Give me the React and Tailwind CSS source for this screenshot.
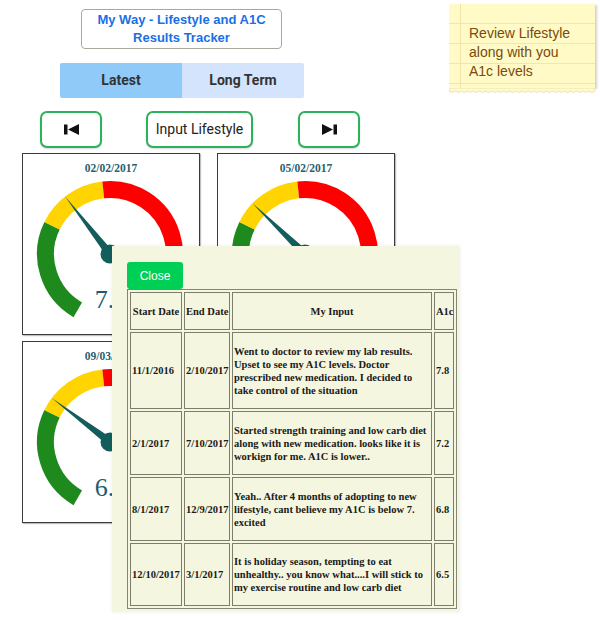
import React from 'react';

const rows = [
  {
    start: '11/1/2016',
    end: '2/10/2017',
    note: 'Went to doctor to review my lab results. Upset to see my A1C levels. Doctor prescribed new medication. I decided to take control of the situation',
    a1c: '7.8',
    h: 'h-[77px]',
  },
  {
    start: '2/1/2017',
    end: '7/10/2017',
    note: 'Started strength training and low carb diet along with new medication. looks like it is workign for me. A1C is lower..',
    a1c: '7.2',
    h: 'h-[64px]',
  },
  {
    start: '8/1/2017',
    end: '12/9/2017',
    note: 'Yeah.. After 4 months of adopting to new lifestyle, cant believe my A1C is below 7. excited',
    a1c: '6.8',
    h: 'h-[64px]',
  },
  {
    start: '12/10/2017',
    end: '3/1/2017',
    note: 'It is holiday season, tempting to eat unhealthy.. you know what....I will stick to my exercise routine and low carb diet',
    a1c: '6.5',
    h: 'h-[63px]',
  },
];

// the 2nd value and the whole 4th card sit under the popup, so they carry no text
const readings = [
  { id: 1, date: '02/02/2017', value: '7.8', angle: -38 },
  { id: 2, date: '05/02/2017', value: '', angle: -46 },
  { id: 3, date: '09/03/2017', value: '6.8', angle: -53 },
  { id: 4, date: '', value: '', angle: -58 },
];

function pt(cx, cy, r, deg) {
  const a = (deg * Math.PI) / 180;
  return [cx + r * Math.sin(a), cy - r * Math.cos(a)];
}

function arc(cx, cy, r, a0, a1) {
  const [x0, y0] = pt(cx, cy, r, a0);
  const [x1, y1] = pt(cx, cy, r, a1);
  const large = a1 - a0 > 180 ? 1 : 0;
  return `M ${x0} ${y0} A ${r} ${r} 0 ${large} 1 ${x1} ${y1}`;
}

function Gauge({ angle }) {
  const cx = 87;
  const cy = 78;
  const [tx, ty] = pt(cx, cy, 73, angle);
  const [lx, ly] = pt(cx, cy, 4, angle - 90);
  const [rx, ry] = pt(cx, cy, 4, angle + 90);
  return (
    <svg width="175" height="157" viewBox="0 0 175 157" className="col-start-1 row-start-1">
      <path d={arc(cx, cy, 64.5, -150, -64)} stroke="#1e8a1e" strokeWidth="17" fill="none" />
      <path d={arc(cx, cy, 64.5, -64, -6)} stroke="#ffd400" strokeWidth="17" fill="none" />
      <path d={arc(cx, cy, 64.5, -6, 150)} stroke="#ff0000" strokeWidth="17" fill="none" />
      <polygon points={`${tx},${ty} ${lx},${ly} ${rx},${ry}`} fill="#135e5c" />
      <circle cx={cx} cy={cy} r="9.5" fill="#135e5c" />
    </svg>
  );
}

function Card({ date, value, angle }) {
  return (
    <div className="w-[178px] h-[182px] border border-[#3a3a3a] shadow-[1px_1px_1px_rgba(0,0,0,0.25)] bg-white flex flex-col">
      <div className="pt-[8px] h-[22px] text-center text-[11.5px] leading-[13px] font-bold text-[#2a5f6f] font-['Liberation_Serif',serif]">
        {date}
      </div>
      <div className="grid">
        <Gauge angle={angle} />
        {value && (
          <div className="col-start-1 row-start-1 mt-[111px] text-center text-[26px] leading-[26px] text-[#1d5c6e] font-['Liberation_Serif',serif]">
            {value}
          </div>
        )}
      </div>
    </div>
  );
}

function SkipIcon({ flip }) {
  return (
    <svg width="15" height="11" viewBox="0 0 15 11" className={flip ? 'rotate-180' : ''}>
      <rect x="0" y="0.5" width="3.5" height="10" fill="#111" />
      <polygon points="4,5.5 15,0 15,11" fill="#111" />
    </svg>
  );
}

export default function App() {
  return (
    <div className="relative w-[600px] h-[620px] overflow-hidden bg-white font-['Liberation_Sans',Arial,sans-serif]">
      <div className="flex">
        <div className="w-[449px]">
          <div className="ml-[81px] mt-[9px] w-[201px] h-[40px] border-[1.5px] border-[#a4ab9c] rounded-[4px] flex flex-col items-center justify-center text-[13px] leading-[18px] font-bold text-[#1a6fe6]">
            <span>My Way - Lifestyle and A1C</span>
            <span>Results Tracker</span>
          </div>

          <div className="ml-[60px] mt-[14px] flex font-['Roboto',sans-serif] text-[14px] font-bold text-[#333]">
            <div className="w-[122px] h-[35px] bg-[#90caf9] rounded-l-[2px] flex items-center justify-center">Latest</div>
            <div className="w-[122px] h-[35px] bg-[#d3e4fc] rounded-r-[2px] flex items-center justify-center">Long Term</div>
          </div>

          <div className="mt-[13px] flex">
            <button className="ml-[40px] w-[62px] h-[37px] border-2 border-[#2bb35b] rounded-[7px] bg-white shadow-[0_1px_2px_rgba(0,0,0,0.15)] flex items-center justify-center">
              <SkipIcon />
            </button>
            <button className="ml-[44px] w-[107px] h-[37px] border-2 border-[#2bb35b] rounded-[7px] bg-white shadow-[0_1px_2px_rgba(0,0,0,0.15)] font-['Roboto',sans-serif] text-[14px] text-[#222]">
              Input Lifestyle
            </button>
            <button className="ml-[45px] w-[62px] h-[37px] border-2 border-[#2bb35b] rounded-[7px] bg-white shadow-[0_1px_2px_rgba(0,0,0,0.15)] flex items-center justify-center">
              <SkipIcon flip />
            </button>
          </div>
        </div>

        <div className="mt-[4px] w-[146px]">
          <div className="h-[84px] pl-[11px] bg-[#fffac6] bg-[repeating-linear-gradient(to_bottom,transparent_0px,transparent_19px,#f0e6ae_19px,#f0e6ae_20px)] shadow-[2px_1px_2px_rgba(0,0,0,0.18)]">
            <div className="h-full border-l border-[#f0e3ab] pl-[8px] pt-[20px] text-[14px] leading-[19px] text-[#7a4a0c]">
              Review Lifestyle
              <br />
              along with you
              <br />
              A1c levels
            </div>
          </div>
          <svg width="146" height="6" viewBox="0 0 146 6" className="block">
            <path
              d={
                'M0 0 L146 0 L146 3 ' +
                Array.from({ length: 24 }, (_, i) => {
                  const x = 146 - i * 6.083;
                  return `Q ${x - 3.04} 6 ${x - 6.083} 3`;
                }).join(' ') +
                ' Z'
              }
              fill="#fffac6"
              stroke="#d8d2a8"
              strokeWidth="0.6"
            />
          </svg>
        </div>
      </div>

      <div className="ml-[22px] mt-[5px] grid grid-cols-[178px_178px] gap-x-[17px] gap-y-[6px]">
        {readings.map((r) => (
          <Card key={r.id} {...r} />
        ))}
      </div>

      <div className="absolute left-[112px] top-[246px] w-[348px] h-[366px] bg-[#f5f6df] px-[15px] pt-[16px] shadow-[0_0_3px_rgba(0,0,0,0.08)]">
        <button className="w-[56px] h-[27px] bg-[#00cf55] rounded-[3px] text-white text-[12px]">Close</button>
        <table className="w-[330px] table-fixed border-separate border-spacing-[2px] border border-[#858575] font-['Liberation_Serif',serif] text-[10.5px] leading-[13px] font-bold text-[#1a1a1a]">
          <colgroup>
            <col className="w-[52px]" />
            <col className="w-[46px]" />
            <col className="w-[200px]" />
            <col className="w-[20px]" />
          </colgroup>
          <thead>
            <tr className="h-[38px]">
              <th className="border border-[#7d7d6d] p-[1px] whitespace-nowrap">Start Date</th>
              <th className="border border-[#7d7d6d] p-[1px] whitespace-nowrap">End Date</th>
              <th className="border border-[#7d7d6d] p-[1px]">My Input</th>
              <th className="border border-[#7d7d6d] p-[1px] text-left">A1c</th>
            </tr>
          </thead>
          <tbody>
            {rows.map((r) => (
              <tr key={r.start} className={r.h}>
                <td className="border border-[#7d7d6d] p-[1px] whitespace-nowrap align-middle">{r.start}</td>
                <td className="border border-[#7d7d6d] p-[1px] whitespace-nowrap align-middle">{r.end}</td>
                <td className="border border-[#7d7d6d] p-[1px] align-middle">{r.note}</td>
                <td className="border border-[#7d7d6d] p-[1px] align-middle">{r.a1c}</td>
              </tr>
            ))}
          </tbody>
        </table>
      </div>
    </div>
  );
}
